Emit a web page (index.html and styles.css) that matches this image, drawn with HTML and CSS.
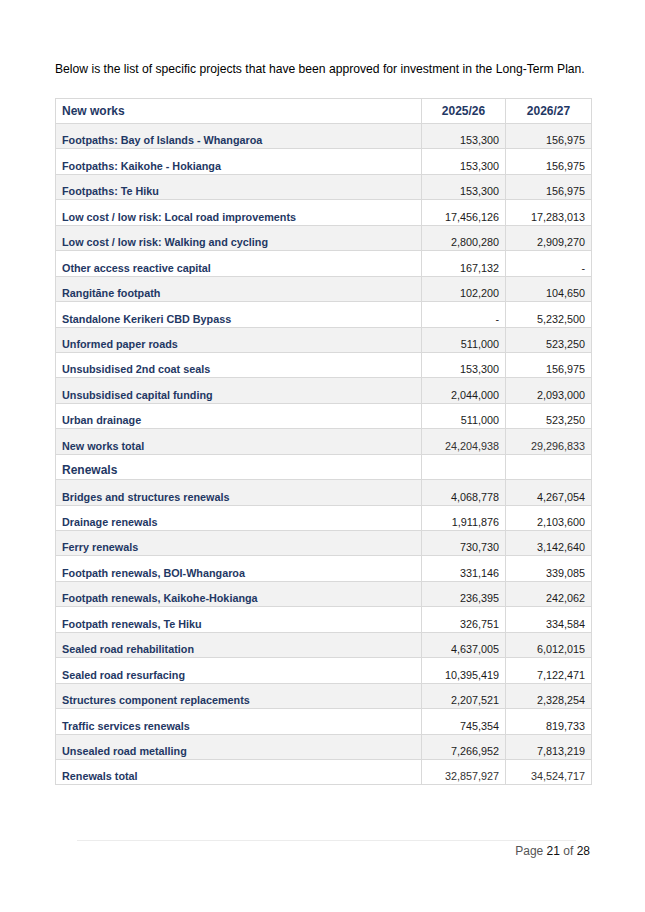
FILE: index.html
```html
<!DOCTYPE html>
<html>
<head>
<meta charset="utf-8">
<link rel="stylesheet" href="styles.css">
</head>
<body>
<div class="page">
  <p class="intro">Below is the list of specific projects that have been approved for investment in the Long-Term Plan.</p>
  <table class="plan">
    <colgroup><col class="c-name"><col class="c-num"><col class="c-num2"></colgroup>
    <tr class="head"><th class="name">New works</th><th class="num">2025/26</th><th class="num">2026/27</th></tr>
    <tr class="alt"><td class="name">Footpaths: Bay of Islands - Whangaroa</td><td class="num">153,300</td><td class="num">156,975</td></tr>
    <tr><td class="name">Footpaths: Kaikohe - Hokianga</td><td class="num">153,300</td><td class="num">156,975</td></tr>
    <tr class="alt"><td class="name">Footpaths: Te Hiku</td><td class="num">153,300</td><td class="num">156,975</td></tr>
    <tr><td class="name">Low cost / low risk: Local road improvements</td><td class="num">17,456,126</td><td class="num">17,283,013</td></tr>
    <tr class="alt"><td class="name">Low cost / low risk: Walking and cycling</td><td class="num">2,800,280</td><td class="num">2,909,270</td></tr>
    <tr><td class="name">Other access reactive capital</td><td class="num">167,132</td><td class="num">-</td></tr>
    <tr class="alt"><td class="name">Rangitāne footpath</td><td class="num">102,200</td><td class="num">104,650</td></tr>
    <tr><td class="name">Standalone Kerikeri CBD Bypass</td><td class="num">-</td><td class="num">5,232,500</td></tr>
    <tr class="alt"><td class="name">Unformed paper roads</td><td class="num">511,000</td><td class="num">523,250</td></tr>
    <tr><td class="name">Unsubsidised 2nd coat seals</td><td class="num">153,300</td><td class="num">156,975</td></tr>
    <tr class="alt"><td class="name">Unsubsidised capital funding</td><td class="num">2,044,000</td><td class="num">2,093,000</td></tr>
    <tr><td class="name">Urban drainage</td><td class="num">511,000</td><td class="num">523,250</td></tr>
    <tr class="alt total"><td class="name">New works total</td><td class="num">24,204,938</td><td class="num">29,296,833</td></tr>
    <tr class="section"><td class="name">Renewals</td><td class="num"></td><td class="num"></td></tr>
    <tr class="alt"><td class="name">Bridges and structures renewals</td><td class="num">4,068,778</td><td class="num">4,267,054</td></tr>
    <tr><td class="name">Drainage renewals</td><td class="num">1,911,876</td><td class="num">2,103,600</td></tr>
    <tr class="alt"><td class="name">Ferry renewals</td><td class="num">730,730</td><td class="num">3,142,640</td></tr>
    <tr><td class="name">Footpath renewals, BOI-Whangaroa</td><td class="num">331,146</td><td class="num">339,085</td></tr>
    <tr class="alt"><td class="name">Footpath renewals, Kaikohe-Hokianga</td><td class="num">236,395</td><td class="num">242,062</td></tr>
    <tr><td class="name">Footpath renewals, Te Hiku</td><td class="num">326,751</td><td class="num">334,584</td></tr>
    <tr class="alt"><td class="name">Sealed road rehabilitation</td><td class="num">4,637,005</td><td class="num">6,012,015</td></tr>
    <tr><td class="name">Sealed road resurfacing</td><td class="num">10,395,419</td><td class="num">7,122,471</td></tr>
    <tr class="alt"><td class="name">Structures component replacements</td><td class="num">2,207,521</td><td class="num">2,328,254</td></tr>
    <tr><td class="name">Traffic services renewals</td><td class="num">745,354</td><td class="num">819,733</td></tr>
    <tr class="alt"><td class="name">Unsealed road metalling</td><td class="num">7,266,952</td><td class="num">7,813,219</td></tr>
    <tr class="total"><td class="name">Renewals total</td><td class="num">32,857,927</td><td class="num">34,524,717</td></tr>
  </table>
  <div class="footer">
    <div class="rule"></div>
    <p class="pageno">Page <b>21</b> of <b>28</b></p>
  </div>
</div>
</body>
</html>
```

FILE: styles.css
```css
html, body {
  margin: 0;
  padding: 0;
  background: #ffffff;
}
.page {
  width: 645px;
  padding: 61px 0 0 55px;
  box-sizing: border-box;
  font-family: "Liberation Sans", Arial, sans-serif;
}
.intro {
  margin: 0;
  font-size: 12.15px;
  line-height: 16px;
  color: #000;
}
.plan {
  margin-top: 21px;
  width: 536px;
  border-collapse: collapse;
  table-layout: fixed;
}
.c-name { width: 366px; }
.c-num { width: 84px; }
.c-num2 { width: 86px; }
.plan th, .plan td {
  border: 1px solid #d9d9d9;
  padding: 0 6px 2px 6px;
  vertical-align: bottom;
  white-space: nowrap;
  overflow: hidden;
}
.plan tr { height: 25.45px; }
.plan tr.head { height: 25px; }
.plan tr.head th {
  vertical-align: middle;
  padding-bottom: 1px;
  font-size: 12px;
  color: #1f3864;
  font-weight: bold;
}
.plan tr.alt td { background: #f2f2f2; }
.name {
  text-align: left;
  font-size: 10.8px;
  font-weight: bold;
  color: #1f3864;
}
td.num {
  text-align: right;
  font-size: 10.8px;
  color: #1a1a1a;
}
tr.total td.num { color: #333333; }
tr.section td.name { font-size: 12px; }
.footer {
  margin-top: 55px;
  width: 535px;
}
.rule {
  margin-left: 22px;
  width: 499px;
  height: 1px;
  background: #ececec;
}
.pageno {
  margin: 3px 0 0 0;
  text-align: right;
  font-size: 12px;
  color: #555555;
}
.pageno b {
  font-weight: normal;
  color: #111111;
}
```
